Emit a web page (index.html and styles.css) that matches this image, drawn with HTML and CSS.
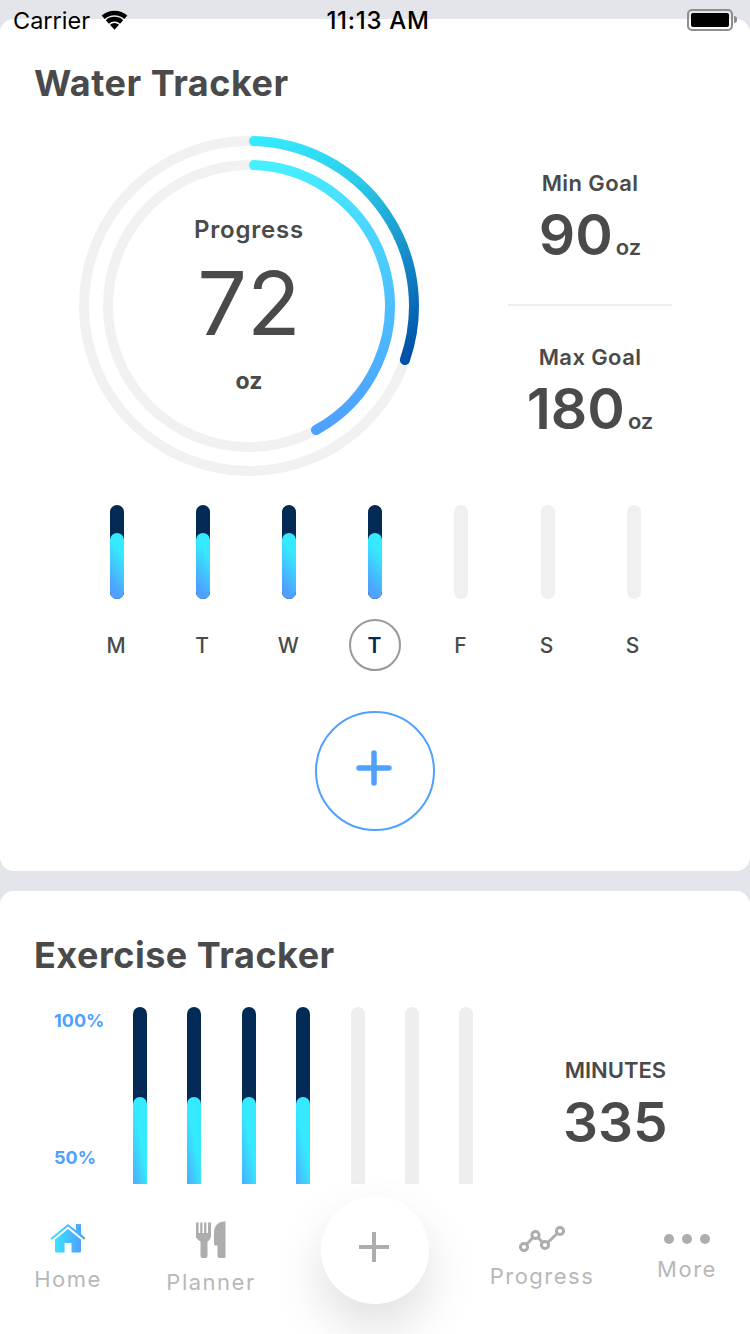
FILE: index.html
```html
<!DOCTYPE html>
<html lang="en">
<head>
<meta charset="utf-8">
<title>Trackers</title>
<link rel="stylesheet" href="styles.css">
</head>
<body>
<div class="phone">
  <div class="status">
    <div class="status-left">
      <span>Carrier</span>
      <svg class="wifi" viewBox="0 0 26 20"><path d="M13 19 8.650 14.170A6.500 6.500 0 0 1 17.350 14.170Z"/><path d="M7.650 13.060 4.640 9.710A12.500 12.500 0 0 1 21.360 9.710L18.350 13.060A8 8 0 0 0 7.650 13.060Z"/><path d="M3.630 8.600 .620 5.250A18.500 18.500 0 0 1 25.380 5.250L22.370 8.600A14 14 0 0 0 3.630 8.600Z"/></svg>
    </div>
    <span class="status-time">11:13 AM</span>
    <div class="status-right"><div class="battery"><div class="battery-fill"></div></div></div>
  </div>

  <section class="card card-water">
    <h2 class="title">Water Tracker</h2>
    <div class="water-top">
      <div class="rings">
        <svg class="rings-svg" viewBox="0 0 350 350">
          <defs>
            <linearGradient id="outerGrad" gradientUnits="userSpaceOnUse" x1="175" y1="10" x2="330" y2="229">
              <stop offset="0" stop-color="#36ecff"/><stop offset="0.35" stop-color="#2bcdea"/><stop offset="1" stop-color="#0050a8"/>
            </linearGradient>
            <linearGradient id="innerGrad" gradientUnits="userSpaceOnUse" x1="175" y1="34" x2="240" y2="299">
              <stop offset="0" stop-color="#46f1ff"/><stop offset="1" stop-color="#4fa1ff"/>
            </linearGradient>
          </defs>
          <circle class="track" cx="175" cy="175" r="165"/>
          <circle class="track" cx="175" cy="175" r="141"/>
          <path class="arc arc-outer" d="M180 10.080A165 165 0 0 1 330.900 229"/>
          <path class="arc arc-inner" d="M180 34.090A141 141 0 0 1 242 299"/>
        </svg>
        <div class="rings-text">
          <span class="rings-label">Progress</span>
          <span class="rings-value">72</span>
          <span class="rings-unit">oz</span>
        </div>
      </div>
      <div class="goals">
        <div class="goal goal-min">
          <span class="goal-label">Min Goal</span>
          <span class="goal-value">90<small class="goal-unit">oz</small></span>
        </div>
        <div class="goal-divider"></div>
        <div class="goal goal-max">
          <span class="goal-label">Max Goal</span>
          <span class="goal-value">180<small class="goal-unit">oz</small></span>
        </div>
      </div>
    </div>

    <div class="week">
      <div class="day"><div class="day-bar"><div class="day-fill"></div></div><span class="day-label">M</span></div>
      <div class="day"><div class="day-bar"><div class="day-fill"></div></div><span class="day-label">T</span></div>
      <div class="day"><div class="day-bar"><div class="day-fill"></div></div><span class="day-label">W</span></div>
      <div class="day"><div class="day-bar"><div class="day-fill"></div></div><span class="day-label day-today">T</span></div>
      <div class="day"><div class="day-bar day-empty"></div><span class="day-label">F</span></div>
      <div class="day"><div class="day-bar day-empty"></div><span class="day-label">S</span></div>
      <div class="day"><div class="day-bar day-empty"></div><span class="day-label">S</span></div>
    </div>

    <div class="add-row">
      <button class="add-water" type="button" aria-label="Add water">
        <svg viewBox="0 0 36 36"><path d="M18 3v30M3 18h30"/></svg>
      </button>
    </div>
  </section>

  <section class="card card-exercise">
    <h2 class="title">Exercise Tracker</h2>
    <div class="exercise-body">
      <div class="axis">
        <span class="axis-label">100%</span>
        <span class="axis-label">50%</span>
      </div>
      <div class="ex-bars">
        <div class="ex-bar"><div class="ex-fill"></div></div>
        <div class="ex-bar"><div class="ex-fill"></div></div>
        <div class="ex-bar"><div class="ex-fill"></div></div>
        <div class="ex-bar"><div class="ex-fill"></div></div>
        <div class="ex-bar ex-empty"></div>
        <div class="ex-bar ex-empty"></div>
        <div class="ex-bar ex-empty"></div>
      </div>
      <div class="minutes">
        <span class="minutes-label">MINUTES</span>
        <span class="minutes-value">335</span>
      </div>
    </div>
  </section>

  <nav class="tabbar">
    <div class="tab tab-home">
      <svg class="icon-home" viewBox="0 0 36 30">
        <defs><linearGradient id="homeGrad" x1="0" y1="0" x2="1" y2="0"><stop offset="0" stop-color="#38e2ff"/><stop offset="1" stop-color="#4fa1ff"/></linearGradient></defs>
        <path fill="url(#homeGrad)" d="M18 1 26 7.200V1h5v10l4.600 4.200-1.400 1.500L18 3.600 1.800 16.700.4 15.200z"/>
        <path fill="url(#homeGrad)" d="M18 6 31 16.500V28a1.500 1.500 0 0 1-1.500 1.500H21.500V20h-7v9.500H6.500A1.500 1.500 0 0 1 5 28V16.500z"/>
      </svg>
      <span class="tab-label">Home</span>
    </div>
    <div class="tab tab-planner">
      <svg class="icon-planner" viewBox="0 0 30 37">
        <path d="M0 1.500h2.600v10.500h1.600V1.500h2.300v10.500h1.600V1.500h2.300v10.500h1.600V1.500H15v13.500c0 3-2.200 4.500-3.500 5.500V35a2 2 0 0 1-2 2h-3a2 2 0 0 1-2-2V20.500C3.200 19.500 0 18 0 15z"/>
        <path d="M28.500.5h1V36a1.500 1.500 0 0 1-1.500 1h-4.500a2 2 0 0 1-2-2V24.500h-2c-1.200 0-1.500-.8-1.500-1.600V12C18 5 22 .5 28.500.5z"/>
      </svg>
      <span class="tab-label">Planner</span>
    </div>
    <button class="tab-add" type="button" aria-label="Add">
      <svg viewBox="0 0 32 32"><path d="M16 1v30M1 16h30"/></svg>
    </button>
    <div class="tab tab-progress">
      <svg class="icon-progress" viewBox="0 0 46 26">
        <path class="line" d="M5 21 16.500 9 26 19 41 5"/>
        <circle class="node" cx="5" cy="21" r="3.600"/>
        <circle class="node" cx="16.500" cy="9" r="3.600"/>
        <circle class="node" cx="26" cy="19" r="3.600"/>
        <circle class="node" cx="41" cy="5" r="3.600"/>
      </svg>
      <span class="tab-label">Progress</span>
    </div>
    <div class="tab tab-more">
      <div class="dots"><i></i><i></i><i></i></div>
      <span class="tab-label">More</span>
    </div>
  </nav>
</div>
</body>
</html>
```
FILE: styles.css
```css
* { box-sizing: border-box; }
html, body { margin: 0; padding: 0; }
body { width: 750px; height: 1334px; overflow: hidden; background: #e3e5ea; font-family: Inter, "Noto Sans", sans-serif; color: #4a4a4a; }
.phone { position: relative; width: 750px; height: 1334px; overflow: hidden; padding-top: 19px; background: #e3e5ea; }

.status { position: absolute; z-index: 3; top: 0; left: 0; width: 750px; height: 40px; display: flex; align-items: center; padding: 0 13px; color: #000; font-size: 23.500px; }
.status-left { display: flex; align-items: center; gap: 11px; width: 200px; flex: none; }
.wifi { width: 27px; height: 21px; fill: #000; flex: none; }
.status-time { flex: 1; text-align: center; padding-left: 6px; font-weight: 500; font-size: 24px; letter-spacing: .7px; }
.status-right { width: 200px; flex: none; display: flex; justify-content: flex-end; padding-right: 4px; }
.battery { position: relative; width: 46px; height: 22px; border: 2px solid #8e8e8e; border-radius: 5px; padding: 2px; }
.battery::after { content: ""; position: absolute; top: 5px; right: -6px; width: 3px; height: 7px; background: #8e8e8e; border-radius: 0 3px 3px 0; }
.battery-fill { width: 100%; height: 100%; background: #000; border-radius: 2px; }

.card { background: #fff; border-radius: 14px; }
.title { margin: 0; font-size: 36px; line-height: 44px; font-weight: 700; letter-spacing: .5px; color: #4a4a4a; }
.card-water { height: 852px; padding: 42px 0 0 34px; }
.card-exercise { margin-top: 20px; height: 460px; padding: 42px 0 0 34px; }

.water-top { display: flex; margin-top: 26px; margin-left: 40px; }
.rings { position: relative; width: 350px; height: 350px; flex: none; }
.rings-svg { display: block; width: 350px; height: 350px; }
.track { fill: none; stroke: #f1f1f2; stroke-width: 10; }
.arc { fill: none; stroke-width: 10; stroke-linecap: round; }
.arc-outer { stroke: url(#outerGrad); }
.arc-inner { stroke: url(#innerGrad); }
.rings-text { position: absolute; top: 0; left: 0; width: 350px; height: 350px; display: flex; flex-direction: column; align-items: center; padding-top: 81px; }
.rings-label { font-size: 24px; line-height: 36px; font-weight: 600; letter-spacing: .8px; }
.rings-value { font-size: 88px; line-height: 100px; font-weight: 400; margin-top: 5px; }
.rings-unit { font-size: 23px; line-height: 36px; font-weight: 700; margin-top: 10px; }

.goals { width: 164px; margin-left: 84px; display: flex; flex-direction: column; align-items: center; padding-top: 36px; }
.goal { width: 200px; display: flex; flex-direction: column; align-items: center; }
.goal-label { font-size: 22px; line-height: 33px; font-weight: 600; letter-spacing: .4px; }
.goal-value { font-size: 57px; line-height: 70px; font-weight: 600; }
.goal-unit { font-size: 22px; font-weight: 600; margin-left: 3px; }
.goal-divider { width: 164px; height: 2px; background: #eeeeee; margin: 22px 0 35px; flex: none; }

.week { display: flex; margin: 24px 0 0 40px; }
.day { width: 86.100px; display: flex; flex-direction: column; align-items: center; }
.day-bar { position: relative; width: 14px; height: 94px; border-radius: 7px; background: #032955; overflow: hidden; }
.day-empty { background: #f0f0f0; }
.day-fill { position: absolute; left: 0; right: 0; bottom: 0; height: 66px; border-radius: 7px; background: linear-gradient(232deg, #35eaff 28%, #4fa1ff 82%); }
.day-label { width: 52px; height: 52px; margin-top: 20px; padding-right: 2px; display: flex; align-items: center; justify-content: center; border-radius: 50%; font-size: 21px; font-weight: 500; }
.day-today { border: 2px solid #999; color: #032955; font-weight: 600; }

.add-row { display: flex; justify-content: center; margin: 40px 0 0 -34px; }
.add-water { width: 120px; height: 120px; border: 2px solid #4fa1ff; border-radius: 50%; background: #fff; padding: 0 2px 6px 0; display: flex; align-items: center; justify-content: center; }
.add-water svg { width: 36px; height: 36px; fill: none; stroke: #4fa1ff; stroke-width: 5.500; stroke-linecap: round; }

.exercise-body { display: flex; margin-top: 30px; margin-left: -14px; }
.axis { width: 113px; flex: none; display: flex; flex-direction: column; padding: 1px 0 0 34px; }
.axis-label { font-size: 18px; line-height: 26px; font-weight: 700; color: #4fa1ff; margin-bottom: 111px; }
.ex-bars { display: flex; gap: 40.400px; flex: none; }
.ex-bar { position: relative; width: 14px; height: 270px; border-radius: 7px 7px 0 0; background: #032955; overflow: hidden; }
.ex-empty { background: #eeeeee; }
.ex-fill { position: absolute; left: 0; right: 0; top: 90px; bottom: 0; border-radius: 7px 7px 0 0; background: linear-gradient(258deg, #35eaff 30%, #4fa1ff 68%); }
.minutes { width: 240px; margin-left: 22px; display: flex; flex-direction: column; align-items: center; padding-top: 46px; }
.minutes-label { font-size: 22px; line-height: 34px; font-weight: 600; }
.minutes-value { font-size: 55px; line-height: 70px; font-weight: 600; }

.tabbar { position: absolute; z-index: 2; left: 0; right: 0; bottom: 0; height: 150px; background: #fff; display: flex; align-items: flex-start; }
.tab { display: flex; flex-direction: column; align-items: center; flex: none; color: #b5b5b5; }
.tab-label { font-size: 22px; line-height: 28px; font-weight: 400; letter-spacing: 1.500px; color: #b8b8b8; white-space: nowrap; }
.tab-home { width: 136px; padding-top: 39px; }
.tab-home .tab-label { margin-top: 12px; }
.icon-home { width: 36px; height: 30px; display: block; }
.tab-planner { width: 150px; padding-top: 37px; }
.tab-planner .tab-label { margin-top: 10px; }
.icon-planner { width: 30px; height: 37px; display: block; fill: #adadad; }
.tab-add { width: 108px; height: 108px; border: 0; padding: 0 2px 6px 0; margin: 12px 0 0 35px; border-radius: 50%; background: #fff; flex: none; box-shadow: 0 24px 50px rgba(0,0,0,.13); display: flex; align-items: center; justify-content: center; }
.tab-add svg { width: 32px; height: 32px; fill: none; stroke: #adadad; stroke-width: 4; }
.tab-progress { width: 178px; margin-left: 24px; padding-top: 42px; }
.tab-progress .tab-label { margin-top: 10px; }
.icon-progress { width: 46px; height: 26px; display: block; }
.icon-progress .line { fill: none; stroke: #adadad; stroke-width: 3; }
.icon-progress .node { fill: #fff; stroke: #adadad; stroke-width: 3; }
.tab-more { width: 112px; padding-top: 50px; }
.dots { display: flex; gap: 8px; }
.dots i { display: block; width: 10px; height: 10px; border-radius: 50%; background: #adadad; }
.tab-more .tab-label { margin-top: 11px; }
```
